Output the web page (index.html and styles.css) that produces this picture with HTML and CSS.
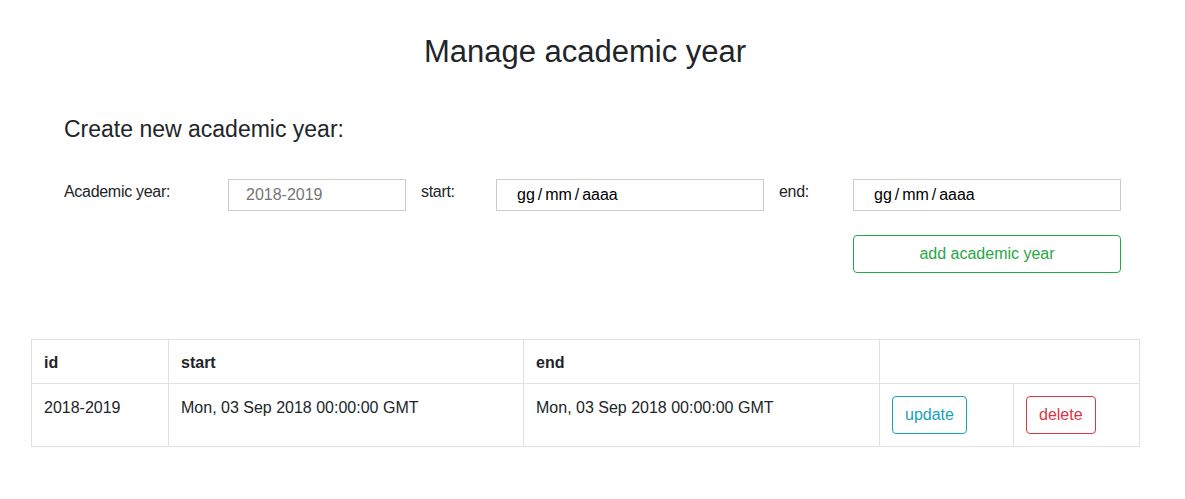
FILE: index.html
```html
<!DOCTYPE html>
<html lang="en">
<head>
<meta charset="utf-8">
<title>Manage academic year</title>
<link rel="stylesheet" href="styles.css">
</head>
<body>
<main class="page">
  <h1 class="title">Manage academic year</h1>
  <section class="create">
    <h4 class="subtitle">Create new academic year:</h4>
    <form class="form-grid">
      <label class="form-label" for="ay">Academic year:</label>
      <input class="field" id="ay" type="text" placeholder="2018-2019">
      <label class="form-label" for="st">start:</label>
      <input class="field date" id="st" type="text" value="gg / mm / aaaa">
      <label class="form-label" for="en">end:</label>
      <input class="field date" id="en" type="text" value="gg / mm / aaaa">
      <button type="button" class="btn btn-add">add academic year</button>
    </form>
  </section>
  <table class="years">
    <colgroup>
      <col class="c-id"><col class="c-start"><col class="c-end"><col class="c-a1"><col class="c-a2">
    </colgroup>
    <thead>
      <tr><th>id</th><th>start</th><th>end</th><th colspan="2"></th></tr>
    </thead>
    <tbody>
      <tr>
        <td>2018-2019</td>
        <td>Mon, 03 Sep 2018 00:00:00 GMT</td>
        <td>Mon, 03 Sep 2018 00:00:00 GMT</td>
        <td><button type="button" class="btn btn-update">update</button></td>
        <td><button type="button" class="btn btn-delete">delete</button></td>
      </tr>
    </tbody>
  </table>
</main>
</body>
</html>
```
FILE: styles.css
```css
* { box-sizing: border-box; }
html, body { margin: 0; padding: 0; background: #fff; }
body {
  font-family: "Liberation Sans", Arial, sans-serif;
  font-size: 16px;
  line-height: 1.5;
  color: #212529;
}
.page {
  width: 1170px;
  padding: 0 31px;
}
.title {
  margin: 33px 0 0;
  font-size: 31px;
  font-weight: 400;
  line-height: 1.2;
  text-align: center;
}
.create {
  padding: 0 18px 0 33px;
}
.subtitle {
  margin: 46px 0 0;
  font-size: 23px;
  font-weight: 400;
  line-height: 1.2;
}
.form-grid {
  display: grid;
  grid-template-columns: 149px 178px 60px 268px 59px 268px;
  column-gap: 15px;
  row-gap: 24px;
  margin-top: 35px;
}
.form-label {
  font-size: 16px;
  padding-top: 1px;
  align-self: start;
  letter-spacing: -0.3px;
}
.field {
  height: 32px;
  border: 1px solid #cccccc;
  border-radius: 0;
  padding: 0 0 0 17px;
  font-family: inherit;
  font-size: 16px;
  color: #000;
  background: #fff;
  outline: none;
}
.field::placeholder { color: #757575; }
.date {
  padding-left: 20px;
  word-spacing: -1.5px;
}
.btn {
  font-family: inherit;
  font-size: 16px;
  line-height: 24px;
  padding: 6px 12px;
  border: 1px solid;
  border-radius: 4px;
  background: #fff;
  cursor: pointer;
}
.btn-add {
  grid-column: 6;
  color: #28a745;
  border-color: #28a745;
}
.btn-update { color: #17a2b8; border-color: #17a2b8; }
.btn-delete { color: #dc3545; border-color: #dc3545; }
.years {
  width: 1108px;
  margin-top: 66px;
  border-collapse: collapse;
  table-layout: fixed;
}
.c-id { width: 137px; }
.c-start { width: 355px; }
.c-end { width: 356px; }
.c-a1 { width: 134px; }
.c-a2 { width: 126px; }
.years th, .years td {
  border: 1px solid #dee2e6;
  text-align: left;
  vertical-align: top;
}
.years th {
  font-weight: 700;
  padding: 11px 12px 8px;
}
.years td {
  padding: 12px;
}
```
